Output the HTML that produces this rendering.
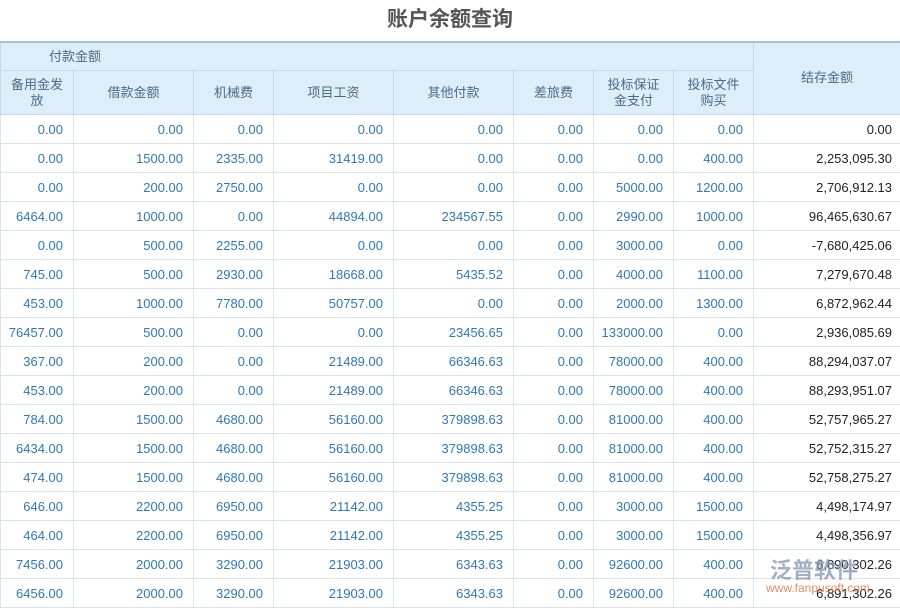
<!DOCTYPE html>
<html><head><meta charset="utf-8"><style>
body{margin:0;width:900px;height:600px;overflow:hidden;background:#fff;font-family:"Liberation Sans","Noto Sans CJK SC",sans-serif;}
.t{position:absolute;top:3px;left:0;width:900px;text-align:center;font-size:21px;font-weight:bold;color:#555;}
table{position:absolute;top:41px;left:0;border-collapse:collapse;table-layout:fixed;width:900px;font-size:13px;}
td,th{border:1px solid #dde3ea;padding:0 10px 0 0;height:28px;white-space:nowrap;}
th{background:#ddeefa;color:#4a6a88;font-weight:normal;text-align:center;padding:0;line-height:16px;border-color:#c4d8e8;}
thead tr:first-child th{border-top:2px solid #9fc3dd;}
td{text-align:right;color:#2f78b8;}
td:last-child{color:#222;padding-right:8px;}
.wm{position:absolute;left:770px;top:553px;color:#8a9bb5;font-size:22px;font-weight:bold;opacity:.8}
.wm2{position:absolute;left:766px;top:581px;color:#e07040;font-size:12px;opacity:.8}
</style></head><body>
<div class="t">账户余额查询</div>
<table>
<colgroup><col style="width:73px"><col style="width:120px"><col style="width:80px"><col style="width:120px"><col style="width:120px"><col style="width:80px"><col style="width:80px"><col style="width:80px"><col style="width:147px"></colgroup>
<thead>
<tr><th colspan="8" style="text-align:left;padding-left:48px;height:27px">付款金额</th><th rowspan="2" style="vertical-align:top;padding-top:27px">结存金额</th></tr>
<tr><th style="height:43px">备用金发<br>放</th><th>借款金额</th><th>机械费</th><th>项目工资</th><th>其他付款</th><th>差旅费</th><th>投标保证<br>金支付</th><th>投标文件<br>购买</th></tr>
</thead>
<tbody>
<tr><td>0.00</td><td>0.00</td><td>0.00</td><td>0.00</td><td>0.00</td><td>0.00</td><td>0.00</td><td>0.00</td><td>0.00</td></tr>
<tr><td>0.00</td><td>1500.00</td><td>2335.00</td><td>31419.00</td><td>0.00</td><td>0.00</td><td>0.00</td><td>400.00</td><td>2,253,095.30</td></tr>
<tr><td>0.00</td><td>200.00</td><td>2750.00</td><td>0.00</td><td>0.00</td><td>0.00</td><td>5000.00</td><td>1200.00</td><td>2,706,912.13</td></tr>
<tr><td>6464.00</td><td>1000.00</td><td>0.00</td><td>44894.00</td><td>234567.55</td><td>0.00</td><td>2990.00</td><td>1000.00</td><td>96,465,630.67</td></tr>
<tr><td>0.00</td><td>500.00</td><td>2255.00</td><td>0.00</td><td>0.00</td><td>0.00</td><td>3000.00</td><td>0.00</td><td>-7,680,425.06</td></tr>
<tr><td>745.00</td><td>500.00</td><td>2930.00</td><td>18668.00</td><td>5435.52</td><td>0.00</td><td>4000.00</td><td>1100.00</td><td>7,279,670.48</td></tr>
<tr><td>453.00</td><td>1000.00</td><td>7780.00</td><td>50757.00</td><td>0.00</td><td>0.00</td><td>2000.00</td><td>1300.00</td><td>6,872,962.44</td></tr>
<tr><td>76457.00</td><td>500.00</td><td>0.00</td><td>0.00</td><td>23456.65</td><td>0.00</td><td>133000.00</td><td>0.00</td><td>2,936,085.69</td></tr>
<tr><td>367.00</td><td>200.00</td><td>0.00</td><td>21489.00</td><td>66346.63</td><td>0.00</td><td>78000.00</td><td>400.00</td><td>88,294,037.07</td></tr>
<tr><td>453.00</td><td>200.00</td><td>0.00</td><td>21489.00</td><td>66346.63</td><td>0.00</td><td>78000.00</td><td>400.00</td><td>88,293,951.07</td></tr>
<tr><td>784.00</td><td>1500.00</td><td>4680.00</td><td>56160.00</td><td>379898.63</td><td>0.00</td><td>81000.00</td><td>400.00</td><td>52,757,965.27</td></tr>
<tr><td>6434.00</td><td>1500.00</td><td>4680.00</td><td>56160.00</td><td>379898.63</td><td>0.00</td><td>81000.00</td><td>400.00</td><td>52,752,315.27</td></tr>
<tr><td>474.00</td><td>1500.00</td><td>4680.00</td><td>56160.00</td><td>379898.63</td><td>0.00</td><td>81000.00</td><td>400.00</td><td>52,758,275.27</td></tr>
<tr><td>646.00</td><td>2200.00</td><td>6950.00</td><td>21142.00</td><td>4355.25</td><td>0.00</td><td>3000.00</td><td>1500.00</td><td>4,498,174.97</td></tr>
<tr><td>464.00</td><td>2200.00</td><td>6950.00</td><td>21142.00</td><td>4355.25</td><td>0.00</td><td>3000.00</td><td>1500.00</td><td>4,498,356.97</td></tr>
<tr><td>7456.00</td><td>2000.00</td><td>3290.00</td><td>21903.00</td><td>6343.63</td><td>0.00</td><td>92600.00</td><td>400.00</td><td>6,890,302.26</td></tr>
<tr><td>6456.00</td><td>2000.00</td><td>3290.00</td><td>21903.00</td><td>6343.63</td><td>0.00</td><td>92600.00</td><td>400.00</td><td>6,891,302.26</td></tr>
</tbody></table>
<div class="wm">泛普软件</div>
<div class="wm2">www.fanpusoft.com</div>
</body></html>
